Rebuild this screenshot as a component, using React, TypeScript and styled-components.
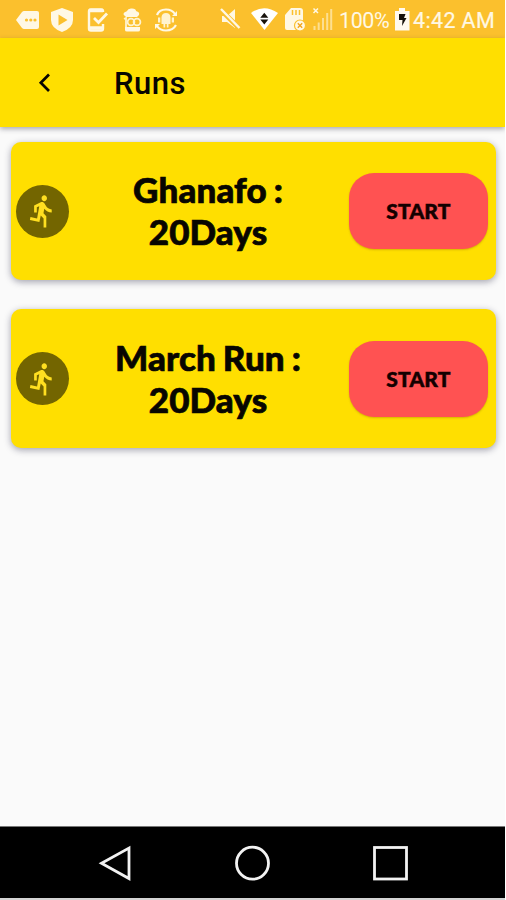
import React from "react";
import styled, { createGlobalStyle } from "styled-components";

const GlobalStyle = createGlobalStyle`
  * { box-sizing: border-box; }
  body { margin: 0; background: #fff; }
  svg { display: block; }
`;

const Screen = styled.div`
  width: 505px;
  height: 900px;
  display: flex;
  flex-direction: column;
  background: #fafafa;
  color: #080600;
  overflow: hidden;
`;

const StatusBar = styled.header`
  height: 38px;
  flex: none;
  background: #fbc02d;
  color: #fff8e4;
  display: flex;
  align-items: flex-start;
  font: 400 21.5px/41px Roboto, sans-serif;
`;

const StatusIcons = styled.svg`
  width: 338px;
  height: 38px;
  flex: none;
`;

const Percent = styled.span`
  width: 57px;
  padding-left: 1px;
  white-space: nowrap;
  letter-spacing: -0.45px;
`;

const Battery = styled.svg`
  width: 18px;
  height: 38px;
  flex: none;
`;

const Clock = styled.span`
  white-space: nowrap;
  letter-spacing: 0.35px;
  -webkit-text-stroke: 0.2px;
`;

const AppBar = styled.div`
  height: 89px;
  flex: none;
  display: flex;
  align-items: center;
  background: #ffdf00;
  box-shadow: 0 2px 5px rgba(40, 40, 60, 0.38);
  z-index: 1;
`;

const BackButton = styled.button`
  width: 114px;
  height: 89px;
  padding: 0 0 0 37px;
  border: 0;
  background: none;
  color: inherit;
`;

const Title = styled.h1`
  margin: 2px 0 0;
  font: 500 31px/40px Roboto, sans-serif;
  letter-spacing: 0.5px;
`;

const RunList = styled.main`
  flex: 1;
  padding: 14.5px 9px 0 11px;
  display: flex;
  flex-direction: column;
  gap: 29px;
`;

const RunCard = styled.article`
  height: 138.5px;
  display: flex;
  align-items: center;
  padding: 1px 8px 0 5px;
  border-radius: 10px;
  background: #ffdf00;
  box-shadow: 0 2px 7px rgba(30, 30, 60, 0.4);
`;

const Avatar = styled.div`
  width: 53px;
  height: 53px;
  border-radius: 50%;
  flex: none;
  display: flex;
  align-items: center;
  justify-content: center;
  background: #736500;
`;

const RunName = styled.h2`
  flex: 1;
  margin: 0 2px 2px 0;
  font: 900 35px/42px Lato, sans-serif;
  -webkit-text-stroke: 0.7px;
  letter-spacing: 0.1px;
  word-spacing: -1.5px;
  text-align: center;
  white-space: pre-line;
`;

const StartButton = styled.button`
  width: 139px;
  height: 76px;
  border: 0;
  border-radius: 25px;
  background: #ff5252;
  box-shadow: 0 1px 2px rgba(120, 80, 0, 0.3);
  color: #140000;
  font: 900 21px/26px Lato, sans-serif;
  -webkit-text-stroke: 0.5px;
  letter-spacing: 0.2px;
  padding: 0;
`;

const NavBar = styled.footer`
  height: 74px;
  flex: none;
  background: #000;
  border-top: 1px solid #777;
  border-bottom: 2px solid #d5d5d5;
`;

const runs = [
  { name: "Ghanafo :", days: 20 },
  { name: "March Run :", days: 20 },
];

function Notifications() {
  return (
    <StatusIcons viewBox="0 0 338 38" fill="#fff8e4" stroke="none">
      <path d="M16 20l6-8q1-1 2-1h13q2 0 2 2v14q0 2-2 2H24q-1 0-2-1z" />
      <g fill="#fbc02d">
        <circle cx="26.5" cy="20" r="1.6" />
        <circle cx="30.8" cy="20" r="1.6" />
        <circle cx="35" cy="20" r="1.6" />
      </g>
      <path d="M62 8l11 4v8q0 8-11 12q-11-4-11-12v-8z" />
      <path d="M58.5 14.5v11l9-5.500z" fill="#fbc02d" />
      <g fill="none" stroke="#fff8e4">
        <path d="M103 12v-1q0-1.500-2-1.500H91q-2 0-2 2v17q0 2 2 2h10q2 0 2-2V24" strokeWidth="2.4" />
        <path d="M89 10.500h14M89 28h14" strokeWidth="3.4" />
        <path d="M94 18l4.500 4.500 8.500-9" strokeWidth="2.8" />
      </g>
      <path d="M125 16q-3-2 0-4 1 0 2-1 1-3 5-2.500 4 0 4 2.500 4 1 3 4l-2 2H126zM125 27h15v3q0 1.500-2 1.500h-11q-2 0-2-1.500z" />
      <g fill="none" stroke="#fff3cf" strokeWidth="1.8">
        <path d="M124 19l2-1v9" />
        <circle cx="131" cy="22" r="3.400" />
        <circle cx="137" cy="22" r="3.400" />
      </g>
      <g fill="none" stroke="#fff8e4" strokeWidth="2.2">
        <path d="M157 15q2-5.500 9-5.500 6 0 9 4.500M176 25q-3 5.500-10 5.500-6 0-9-4.500" />
      </g>
      <path d="M177 11v5h-5zM155 29v-5h5z" />
      <path d="M161.500 17q.5-4 4.500-4t4.500 4v7h-2v3.500h-1.700V24h-1.600v3.500h-1.700V24h-2zM158 17.500h2.300v5H158zM171.700 17.500h2.300v5h-2.300z" fill="#fff3cf" />
      <g>
        <path d="M222 16h5l8-7v19l-8-6h-5z" />
        <path d="M220 9l20 20" stroke="#fbc02d" strokeWidth="5" />
        <path d="M221 9l18.500 19" fill="none" stroke="#fff8e4" strokeWidth="2.4" />
      </g>
      <path d="M251 13q13-9.500 27 0L264.500 30z" fill="#fff" />
      <path d="M264.300 12.800l4 5h-8zM264.300 24.600l4-5h-8z" fill="#17120b" />
      <path d="M285 15l6-7h9q3 0 3 3v19h-16q-2 0-2-2z" />
      <path d="M292.500 10v5M296 10v5M299.500 10v5" stroke="#fbc02d" strokeWidth="1.500" />
      <circle cx="300" cy="25.500" r="5.500" stroke="#fbc02d" strokeWidth="1.200" />
      <path d="M297.800 23.300l4.400 4.400M302.200 23.300l-4.400 4.400" stroke="#f2a51e" strokeWidth="1.400" />
      <path d="M313.500 8.500l4.500 4.500M318 8.500l-4.500 4.500" stroke="#fff8e4" strokeWidth="1.500" />
      <path d="M314.500 26v4M318.700 22.500v7.500M323 18v12M327.200 13v17M331.200 9v21" stroke="#fddf91" strokeWidth="2" />
    </StatusIcons>
  );
}

function RunnerIcon() {
  return (
    <svg width="32.500" height="36" viewBox="0 0 24 24" preserveAspectRatio="none" fill="#ffdf20">
      <path d="M13.490 5.480c1.100 0 2-.9 2-2s-.9-2-2-2-2 .9-2 2 .9 2 2 2zm-3.600 13.900l1-4.400 2.100 2v6h2v-7.500l-2.100-2 .6-3c1.300 1.500 3.300 2.500 5.500 2.500v-2c-1.900 0-3.500-1-4.300-2.400l-1-1.600c-.4-.6-1-1-1.700-1-.3 0-.5.1-.8.1l-5.200 2.200v4.700h2v-3.400l1.800-.7-1.600 8.100-4.900-1-.4 2 7 1.400z" />
    </svg>
  );
}

export default function App() {
  return (
    <>
      <GlobalStyle />
      <Screen>
        <StatusBar>
          <Notifications />
          <Percent>100%</Percent>
          <Battery viewBox="0 0 18 38">
            <path d="M0 11h4V8h6v3h4.500v19.500H0z" fill="#fffaf0" />
            <path d="M4 14h6.500l-1.500 4h2.500L7 26l.5-6H4z" fill="#15100a" />
          </Battery>
          <Clock>4:42 AM</Clock>
        </StatusBar>
        <AppBar>
          <BackButton aria-label="Back">
            <svg width="16" height="20" viewBox="0 0 16 20" fill="none" stroke="currentColor" strokeWidth="2.700">
              <path d="M12 1.500L3.800 9.800 12 18" />
            </svg>
          </BackButton>
          <Title>Runs</Title>
        </AppBar>
        <RunList>
          {runs.map((run) => (
            <RunCard key={run.name}>
              <Avatar>
                <RunnerIcon />
              </Avatar>
              <RunName>{`${run.name}\n${run.days}Days`}</RunName>
              <StartButton>START</StartButton>
            </RunCard>
          ))}
        </RunList>
        <NavBar>
          <svg width="505" height="71" viewBox="0 0 505 71" fill="none" stroke="#f2f2f2" strokeWidth="2.800">
            <path d="M129 21v30.500L101.500 36.200z" />
            <circle cx="252.500" cy="36.200" r="16" />
            <rect x="374.500" y="20.500" width="32" height="31.500" />
          </svg>
        </NavBar>
      </Screen>
    </>
  );
}
